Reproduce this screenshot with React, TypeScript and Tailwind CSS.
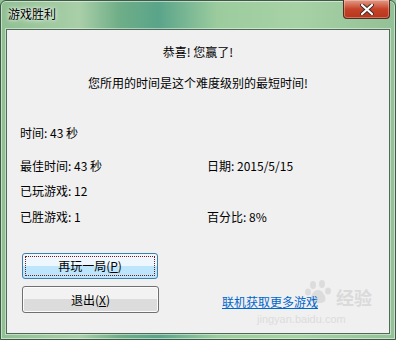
const font = { fontFamily: '"Noto Sans CJK SC", "Microsoft YaHei", sans-serif' };

// ── Close button (Aero red X) ──────────────────────────

function CloseButton() {
  return (
    <div className="absolute right-[6px] top-0 flex h-[19px] w-[47px] items-center justify-center rounded-b-[4px] border border-t-0 border-[#5a2a22] bg-gradient-to-b from-[#e29a86] via-[#c64328] to-[#b5361d] shadow-[inset_0_0_0_1px_rgba(255,255,255,0.3)]">
      <svg width="14" height="11" viewBox="0 0 14 11">
        <path d="M2 1 L12 10 M12 1 L2 10" stroke="#3a2a28" strokeWidth="4" strokeLinecap="round" />
        <path d="M2 1 L12 10 M12 1 L2 10" stroke="#ffffff" strokeWidth="2.2" strokeLinecap="round" />
      </svg>
    </div>
  );
}

// ── Win7 style push buttons ────────────────────────────

function DefaultButton({ children }: { children: React.ReactNode }) {
  return (
    <div className="relative flex h-[26px] w-[136px] items-center justify-center rounded-[3px] border border-[#3c7fb1] bg-gradient-to-b from-[#edf7fd] from-50% to-[#bde5fb] to-50% text-[12px] text-black">
      <div className="pointer-events-none absolute inset-[2px] border border-dotted border-[#6b1f1f]" />
      {children}
    </div>
  );
}

function PlainButton({ children }: { children: React.ReactNode }) {
  return (
    <div className="flex h-[27px] w-[137px] items-center justify-center rounded-[3px] border border-[#707070] bg-gradient-to-b from-[#f2f2f2] from-50% to-[#dcdcdc] to-50% text-[12px] text-black shadow-[inset_0_0_0_1px_#fcfcfc]">
      {children}
    </div>
  );
}

// faint baidu paw from the screenshot watermark
function Paw() {
  return (
    <svg width="28" height="24" viewBox="0 0 28 24" fill="#dcdcdc">
      <ellipse cx="8" cy="5" rx="3" ry="4" />
      <ellipse cx="17" cy="4" rx="3" ry="4" />
      <ellipse cx="3" cy="12" rx="3" ry="3.5" />
      <ellipse cx="23" cy="11" rx="3" ry="3.5" />
      <path d="M13 10 C8 10 4 18 6 21 C8 24 18 24 20 21 C22 18 18 10 13 10 Z" />
    </svg>
  );
}

export default function App() {
  return (
    <div
      className="relative h-[340px] w-[396px] overflow-hidden bg-[linear-gradient(90deg,#8fbf92_0%,#a9cfa8_20%,#6fae88_30%,#5aa48a_40%,#9ccc9e_55%,#a7d2a6_75%,#93c096_100%)]"
      style={font}
    >
      {/* outer frame edge */}
      <div className="pointer-events-none absolute inset-0 rounded-t-[6px] border border-[#3d5a45] shadow-[inset_0_0_0_1px_rgba(255,255,255,0.5)]" />

      {/* title bar */}
      <div className="flex h-[29px] items-center pl-[8px] pb-[2px] text-[12px] text-black [text-shadow:0_0_6px_#ffffff,0_0_3px_#ffffff]">
        游戏胜利
      </div>
      <CloseButton />

      {/* client area */}
      <div className="relative mx-[6px] h-[305px] border border-[#4f6b57] bg-[#f0f0f0] shadow-[0_0_0_1px_rgba(255,255,255,0.45)]">
        {/* watermark */}
        <div className="pointer-events-none absolute left-[298px] top-[250px]">
          <Paw />
        </div>
        <span className="pointer-events-none absolute left-[329px] top-[257px] text-[18px] font-bold leading-5 text-[#dadada]">
          经验
        </span>
        <span
          className="pointer-events-none absolute left-[250px] top-[283px] text-[11px] leading-3 text-[#dcdcdc]"
          style={{ fontFamily: '"Liberation Sans", sans-serif' }}
        >
          jingyan.baidu.com
        </span>

        <div className="relative pt-[14px] text-center text-[12px] leading-4 text-black">
          恭喜! 您赢了!
        </div>
        <div className="relative mt-[15px] text-center text-[12px] leading-4 text-black">
          您所用的时间是这个难度级别的最短时间!
        </div>

        <div className="relative pl-[13px] text-[12px] leading-4 text-black">
          <div className="mt-[34px]">时间: 43 秒</div>
          <div className="mt-[17px] grid grid-cols-[187px_1fr]">
            <span>最佳时间: 43 秒</span>
            <span>日期: 2015/5/15</span>
          </div>
          <div className="mt-[9px]">已玩游戏: 12</div>
          <div className="mt-[10px] grid grid-cols-[187px_1fr]">
            <span>已胜游戏: 1</span>
            <span>百分比: 8%</span>
          </div>
        </div>

        <div className="relative mt-[28px] pl-[15px]">
          <DefaultButton>
            再玩一局(<span className="underline">P</span>)
          </DefaultButton>
          <div className="mt-[7px] flex items-center">
            <PlainButton>
              退出(<span className="underline">X</span>)
            </PlainButton>
            <span className="ml-[63px] mt-[4px] text-[12px] leading-4 text-[#0066cc] underline">
              联机获取更多游戏
            </span>
          </div>
        </div>
      </div>
    </div>
  );
}
